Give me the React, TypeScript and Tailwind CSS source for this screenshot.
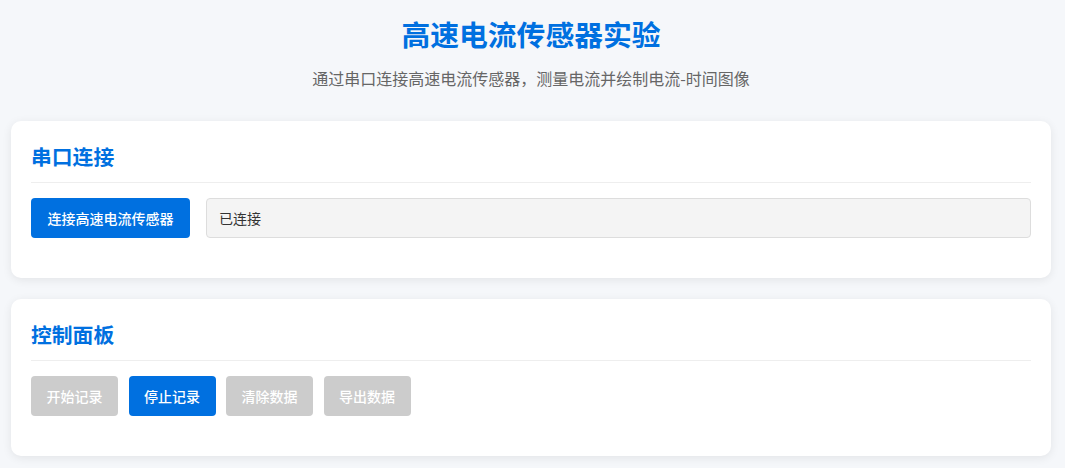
import React from "react";

const font = { fontFamily: '"Noto Sans CJK SC", "Noto Sans", sans-serif' };

function Card({ title, children }: { title: string; children: React.ReactNode }) {
  return (
    <div className="bg-white rounded-[10px] shadow-[0_2px_10px_rgba(0,0,0,0.08)] px-5 pt-5 pb-10">
      <h2 className="text-[20.8px] leading-[31px] font-bold text-[#0070e0] pb-[10px] border-b border-[#eeeeee] mb-[15px]">
        {title}
      </h2>
      {children}
    </div>
  );
}

const gray = "h-10 px-[15.5px] rounded-[4px] bg-[#cccccc] text-white text-[14px] font-medium";
const blue = "h-10 px-[15.5px] rounded-[4px] bg-[#0070e0] text-white text-[14px] font-medium";

export default function App() {
  return (
    <div className="min-h-[468px] bg-[#f5f7fa] pt-[17px]" style={font}>
      <div className="w-[1040px] ml-[11px]">
        <h1 className="text-center text-[28.8px] leading-[34px] font-bold text-[#0070e0] mb-[15px]">
          高速电流传感器实验
        </h1>
        <p className="text-center text-[16px] leading-6 text-[#666666] mb-[31px]">
          通过串口连接高速电流传感器，测量电流并绘制电流-时间图像
        </p>
        <div className="flex flex-col gap-[21px]">
          <Card title="串口连接">
            <div className="flex items-center gap-4">
              <button className="h-10 px-[16.5px] rounded-[4px] bg-[#0070e0] text-white text-[14px] font-medium whitespace-nowrap">
                连接高速电流传感器
              </button>
              <div className="flex-1 h-10 flex items-center px-[12px] bg-[#f4f4f4] border border-[#dddddd] rounded-[4px] text-[14px] text-[#333333]">
                已连接
              </div>
            </div>
          </Card>
          <Card title="控制面板">
            <div className="flex items-center gap-[10.5px]">
              <button className={gray}>开始记录</button>
              <button className={blue}>停止记录</button>
              <button className={gray}>清除数据</button>
              <button className={gray}>导出数据</button>
            </div>
          </Card>
        </div>
      </div>
    </div>
  );
}
